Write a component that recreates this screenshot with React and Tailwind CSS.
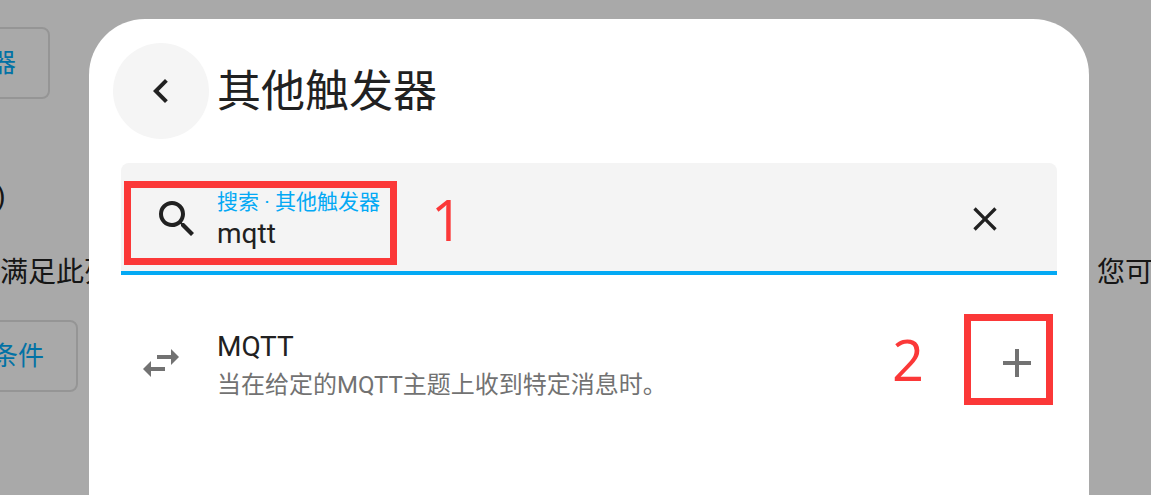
function Icon({ d, className }) {
  return (
    <svg viewBox="0 0 24 24" fill="currentColor" aria-hidden="true" className={className}>
      <path d={d} />
    </svg>
  );
}

const icons = {
  back: 'M15.41,16.58L10.83,12L15.41,7.41L14,6L8,12L14,18L15.41,16.58Z',
  search:
    'M9.5,3A6.5,6.5 0 0,1 16,9.5C16,11.11 15.41,12.59 14.44,13.73L14.71,14H15.5L20.5,19L19,20.5L14,15.5V14.71L13.73,14.44C12.59,15.41 11.11,16 9.5,16A6.5,6.5 0 0,1 3,9.5A6.5,6.5 0 0,1 9.5,3M9.5,5C7,5 5,7 5,9.5C5,12 7,14 9.5,14C12,14 14,12 14,9.5C14,7 12,5 9.5,5Z',
  close:
    'M19,6.41L17.59,5L12,10.59L6.41,5L5,6.41L10.59,12L5,17.59L6.41,19L12,13.41L17.59,19L19,17.59L13.41,12L19,6.41Z',
  swap: 'M21,9L17,5V8H10V10H17V13L21,9M7,11L3,15L7,19V16H14V14H7V11Z',
  plus: 'M19,13H13V19H11V13H5V11H11V5H13V11H19V13Z',
};

function Backdrop() {
  return (
    <main className="flex flex-col items-start pt-[27px] text-[28px] leading-10">
      <button className="-ml-3 h-[72px] rounded-lg border-2 border-[#dcdcdc] pr-8 text-[26px] text-[#03a9f4]">
        器
      </button>
      <h2 className="mt-[78px] -ml-1">)</h2>
      <p className="mt-9 flex w-full justify-between whitespace-nowrap">
        <span>满足此列</span>
        <span className="-mr-0.5">您可</span>
      </p>
      <button className="mt-[27px] -ml-2.5 h-[72px] rounded-lg border-2 border-[#dcdcdc] pr-8 text-[26px] text-[#03a9f4]">
        条件
      </button>
    </main>
  );
}

function Dialog() {
  return (
    <section
      role="dialog"
      aria-labelledby="dialog-title"
      className="flex-1 rounded-t-[56px] bg-white px-8 pt-6"
    >
      <header className="-ml-2 flex items-center gap-2">
        <button
          aria-label="返回"
          className="flex size-24 items-center justify-center rounded-full bg-[#f5f5f5]"
        >
          <Icon d={icons.back} className="size-12" />
        </button>
        <h1 id="dialog-title" className="pt-0.5 text-[44px] leading-[56px]">
          其他触发器
        </h1>
      </header>

      <div className="relative mt-6 flex h-28 items-center rounded-t-lg border-b-4 border-[#03a9f4] bg-[#f4f4f4] pr-6 pl-8">
        <Icon d={icons.search} className="mt-1 size-12 shrink-0" />
        <div className="ml-4 flex min-w-0 flex-1 flex-col pt-0.5">
          <label htmlFor="search" className="text-[21px] leading-8 text-[#03a9f4]">
            搜索 · 其他触发器
          </label>
          <input
            id="search"
            defaultValue="mqtt"
            className="h-8 w-full bg-transparent text-[28px] leading-8 outline-none"
          />
        </div>
        <button aria-label="清除" className="mt-1 flex size-24 items-center justify-center">
          <Icon d={icons.close} className="size-10" />
        </button>
        <div className="pointer-events-none absolute top-[18px] left-[3px] h-[84px] w-[273px] border-7 border-[#fb3838]" />
        <span className="pointer-events-none absolute top-[26px] left-[310px] font-['Open_Sans',sans-serif] text-[56px] leading-[60px] text-[#fb3838]">
          1
        </span>
      </div>

      <ul className="mt-10">
        <li className="relative flex items-center px-4 py-[7px] text-[#727272]">
          <Icon d={icons.swap} className="size-12 shrink-0" />
          <div className="ml-8 min-w-0 flex-1 pt-1.5">
            <h3 className="text-[28px] leading-[38px] text-[#212121]">MQTT</h3>
            <p className="text-2xl leading-[38px]">当在给定的MQTT主题上收到特定消息时。</p>
          </div>
          <button aria-label="添加">
            <Icon d={icons.plus} className="size-12" />
          </button>
          <div className="pointer-events-none absolute -top-px right-1 h-[91px] w-[89px] border-7 border-[#fb3838]" />
          <span className="pointer-events-none absolute top-3.5 right-[133px] font-['Open_Sans',sans-serif] text-[56px] leading-[60px] text-[#fb3838]">
            2
          </span>
        </li>
      </ul>
    </section>
  );
}

export default function App() {
  return (
    <div className="relative min-h-screen overflow-hidden bg-[#fafafa] font-[Roboto,'Noto_Sans_CJK_SC',sans-serif] text-[#212121]">
      <Backdrop />
      <div className="absolute inset-0 flex bg-black/32 pt-[19px] pr-[62px] pl-[89px]">
        <Dialog />
      </div>
    </div>
  );
}
